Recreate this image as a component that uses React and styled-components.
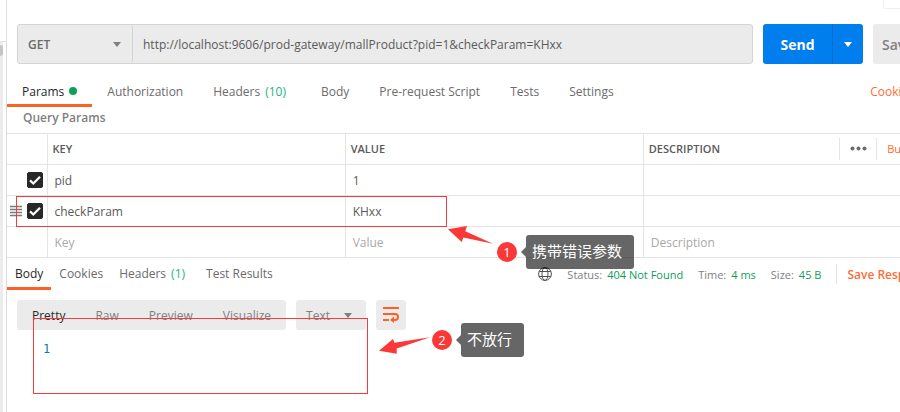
import { useState } from "react";
import styled, { createGlobalStyle } from "styled-components";

const GlobalStyle = createGlobalStyle`
  * {
    box-sizing: border-box;
  }
  body {
    margin: 0;
    background: #fff;
    color: #5a5a5a;
    font-family: "Open Sans", "Noto Sans CJK SC", sans-serif;
    font-size: 12px;
  }
  button, input, select {
    font: inherit;
    color: inherit;
    border: none;
    background: none;
    margin: 0;
    padding: 0;
    outline: none;
  }
  button {
    cursor: pointer;
  }
`
const Viewport = styled.div`
  position: relative;
  overflow: hidden;
  min-height: 100vh;
  display: flex;
`
/* the workspace runs on past the right edge of the window */
const Workspace = styled.div`
  flex: none;
  width: calc(100% + 80px);
  display: flex;
`
const Rail = styled.div`
  flex: none;
  width: 7px;
  border-right: 1px solid #dcdcdc;
  padding-top: 41px;
`
const RailTrack = styled.div`
  height: 100%;
  border-top: 1px solid #e4e4e4;
  padding-top: 3px;
  background: linear-gradient(#ececec, #ececec) left / 3px 100% no-repeat;
`
const RailThumb = styled.div`
  width: 3px;
  height: 11px;
  border-radius: 0 3px 3px 0;
  background: #c4c4c4;
`
const Main = styled.main`
  flex: 1;
  min-width: 0;
`
const TopStrip = styled.header`
  height: 24px;
  display: flex;
  justify-content: flex-end;
  padding-right: 20px;
`
const TopButton = styled.button`
  width: 77px;
  height: 9px;
  border: 1px solid #f0f0f0;
  border-top: none;
  border-radius: 0 0 3px 3px;
`
const RequestBar = styled.form`
  display: flex;
  gap: 10px;
  height: 40px;
  padding-left: 10px;
`
const UrlGroup = styled.div`
  flex: 1;
  display: flex;
  border: 1px solid #d4d4d4;
  border-radius: 3px;
  background: #ebebeb;
`
const SelectBox = styled.label`
  position: relative;
  display: flex;
  align-items: center;
  width: ${props => props.width};
  height: ${props => props.height || 'auto'};
  border-right: ${props => props.divided ? '1px solid #d4d4d4' : 'none'};
  border-radius: 3px;
  background: #ebebeb;
  color: ${props => props.color};
  & svg {
    position: absolute;
    right: ${props => props.caret};
    pointer-events: none;
  }
`
const Select = styled.select`
  appearance: none;
  width: 100%;
  height: 100%;
  padding-left: 10px;
  font-weight: ${props => props.weight || 400};
`
const UrlInput = styled.input`
  flex: 1;
  min-width: 0;
  padding: 0 10px;
`
const SendGroup = styled.div`
  display: flex;
  width: 100px;
  border-radius: 3px;
  overflow: hidden;
  background: #007eee;
  color: #fff;
`
const SendButton = styled.button`
  flex: 1;
  font-size: 14px;
  font-weight: 700;
`
const SendMore = styled.button`
  display: flex;
  align-items: center;
  justify-content: center;
  width: 31px;
  border-left: 1px solid #0a6bcc;
`
const SaveButton = styled.button`
  width: 107px;
  padding-left: 9px;
  border-radius: 3px;
  background: #ebebeb;
  color: #808080;
  font-size: 14px;
  font-weight: 600;
  text-align: left;
`
const TabRow = styled.nav`
  display: flex;
  height: ${props => props.height};
`
const Tab = styled.button`
  display: flex;
  align-items: center;
  padding: ${props => props.drop} ${props => props.pad} 0;
  border-bottom: 3px solid ${props => props.active ? '#ff6026' : 'transparent'};
  color: ${props => props.active ? '#282828' : '#6b6b6b'};
`
const Count = styled.span`
  margin: 0 5px;
  color: #26b47f;
`
const Dot = styled.span`
  width: 8px;
  height: 8px;
  margin-left: 5px;
  border-radius: 50%;
  background: #0aa354;
`
const TextLink = styled.a`
  align-self: center;
  margin-left: ${props => props.push ? 'auto' : '0'};
  margin-right: ${props => props.end || '0'};
  padding-top: ${props => props.drop || '0'};
  color: #ff6c37;
  font-weight: ${props => props.weight || 400};
  text-decoration: none;
  white-space: nowrap;
`
const SectionTitle = styled.h2`
  margin: 0;
  padding-left: 16px;
  height: 26px;
  line-height: 22px;
  font-size: 12px;
  font-weight: 600;
  color: #808080;
`
const TableWrap = styled.div`
  margin-right: 38px;
`
const Table = styled.table`
  width: 100%;
  table-layout: fixed;
  border-collapse: collapse;
`
const Row = styled.tr`
  height: 31px;
  border-top: 1px solid #e4e4e4;
  border-bottom: 1px solid #e4e4e4;
`
const HeadCell = styled.th`
  width: ${props => props.width || 'auto'};
  padding: 0 0 1px 5px;
  border-right: 1px solid #e4e4e4;
  font-size: 11px;
  font-weight: 600;
  text-align: left;
`
const HeadTools = styled.div`
  display: flex;
  align-items: center;
  height: 22px;
`
const MoreButton = styled.button`
  display: flex;
  align-items: center;
  justify-content: center;
  width: 38px;
  height: 22px;
  margin-left: auto;
  margin-right: 10px;
  border-left: 1px solid #e4e4e4;
  border-right: 1px solid #e4e4e4;
`
const Cell = styled.td`
  padding: 0;
  border-right: 1px solid #e4e4e4;
`
const CellInput = styled.input`
  display: block;
  width: 100%;
  height: 30px;
  padding: 0 7px;
  &::placeholder {
    color: #a9a9a9;
    opacity: 1;
  }
`
const RowTools = styled.div`
  display: flex;
  align-items: center;
  justify-content: flex-end;
  gap: 5px;
  padding-right: 4px;
`
const CheckLabel = styled.label`
  display: grid;
  width: 16px;
  height: 16px;
  & > * {
    grid-area: 1 / 1;
  }
  & svg {
    pointer-events: none;
  }
`
const CheckInput = styled.input`
  appearance: none;
  width: 16px;
  height: 16px;
  border: 1px solid #282828;
  border-radius: 2px;
  &:checked {
    background: #282828;
  }
`
const ResponseMeta = styled.div`
  display: flex;
  align-items: center;
  margin-left: auto;
  margin-right: 47px;
  font-size: 11px;
  color: #808080;
  white-space: nowrap;
`
const Meta = styled.span`
  margin-left: 15px;
`
const MetaValue = styled.span`
  margin-left: 5px;
  color: #0f9d58;
`
const SaveResponse = styled.div`
  display: flex;
  height: 20px;
  margin-left: 15px;
  padding-left: 10px;
  border-left: 1px solid #e4e4e4;
  font-size: 12px;
`
const ViewBar = styled.div`
  display: flex;
  gap: 10px;
  padding: 10px 10px 0;
  height: 40px;
`
const Segments = styled.div`
  display: flex;
  border-radius: 3px;
  background: #ebebeb;
`
const Segment = styled.button`
  padding: 0 15px;
  color: ${props => props.active ? '#282828' : '#808080'};
`
const WrapButton = styled.button`
  display: flex;
  align-items: center;
  justify-content: center;
  width: 30px;
  height: 30px;
  border-radius: 3px;
  background: #ebebeb;
`
const Editor = styled.pre`
  margin: 0;
  padding: 10px 36px;
  font-family: "DejaVu Sans Mono", monospace;
  font-size: 12px;
  line-height: 18px;
  color: #0f7ba0;
`
const Frame = styled.div`
  position: absolute;
  left: ${props => props.x}px;
  top: ${props => props.y}px;
  width: ${props => props.w}px;
  height: ${props => props.h}px;
  border: 1px solid #f93a3a;
  pointer-events: none;
`
const Arrow = styled.svg`
  position: absolute;
  left: ${props => props.x}px;
  top: ${props => props.y}px;
  fill: #fb3838;
  pointer-events: none;
`
const Note = styled.div`
  position: absolute;
  left: ${props => props.x}px;
  top: ${props => props.y}px;
  display: flex;
  align-items: center;
`
const NoteNumber = styled.span`
  width: 20px;
  height: 20px;
  margin-right: 4px;
  border-radius: 50%;
  background: #fb3838;
  color: #fff;
  font-size: 13px;
  line-height: 20px;
  text-align: center;
`
const NotePointer = styled.span`
  border: 5px solid transparent;
  border-left: none;
  border-right-color: rgba(0, 0, 0, 0.6);
`
const NoteText = styled.span`
  height: 34px;
  padding: 0 12px 0 6px;
  border-radius: 3px;
  background: rgba(0, 0, 0, 0.6);
  color: #fff;
  font-family: "Noto Sans CJK SC", sans-serif;
  font-size: 15px;
  line-height: 32px;
  white-space: nowrap;
`

const tabs = ["Params", "Authorization", "Headers", "Body", "Pre-request Script", "Tests", "Settings"]
const responseTabs = ["Body", "Cookies", "Headers", "Test Results"]
const views = ["Pretty", "Raw", "Preview", "Visualize"]
const params = [
  { key: "pid", value: "1" },
  { key: "checkParam", value: "KHxx", handle: true },
]

function Caret({ color, width = 8 }) {
  return (
    <svg width={width} height="5" viewBox="0 0 8 5" preserveAspectRatio="none">
      <path d="M0 0h8L4 5z" fill={color} />
    </svg>
  )
}

function Checkbox({ label }) {
  const [checked, setChecked] = useState(true)
  return (
    <CheckLabel>
      <CheckInput type="checkbox" aria-label={label} checked={checked} onChange={e => setChecked(e.target.checked)} />
      {checked &&
        <svg width="16" height="16" viewBox="0 0 16 16">
          <path d="M3 8.4L6.3 11.5L13 4.8" fill="none" stroke="#fff" strokeWidth="2.2" />
        </svg>
      }
    </CheckLabel>
  )
}

function ParamsTable() {
  return (
    <TableWrap>
      <Table>
        <thead>
          <Row>
            <HeadCell width="40px" aria-label="Enabled" />
            <HeadCell>KEY</HeadCell>
            <HeadCell>VALUE</HeadCell>
            <HeadCell>
              <HeadTools>
                DESCRIPTION
                <MoreButton type="button" aria-label="More">
                  <svg width="17" height="5" viewBox="0 0 17 5" fill="#6b6b6b">
                    <circle cx="2.5" cy="2.5" r="2" />
                    <circle cx="8.5" cy="2.5" r="2" />
                    <circle cx="14.5" cy="2.5" r="2" />
                  </svg>
                </MoreButton>
                <TextLink href="#bulk" end="9px">Bulk Edit</TextLink>
              </HeadTools>
            </HeadCell>
          </Row>
        </thead>
        <tbody>
          {params.map(item =>
            <Row key={item.key}>
              <Cell>
                <RowTools>
                  {item.handle &&
                    <svg width="12" height="12" viewBox="0 0 12 12" stroke="#7a7a7a" strokeWidth="1.5">
                      <path d="M0 1.5h12M0 4.5h12M0 7.5h12M0 10.5h12" />
                    </svg>
                  }
                  <Checkbox label={item.key} />
                </RowTools>
              </Cell>
              <Cell><CellInput aria-label="Key" defaultValue={item.key} /></Cell>
              <Cell><CellInput aria-label="Value" defaultValue={item.value} /></Cell>
              <Cell><CellInput aria-label="Description" /></Cell>
            </Row>
          )}
          <Row>
            <Cell />
            <Cell><CellInput aria-label="New key" placeholder="Key" /></Cell>
            <Cell><CellInput aria-label="New value" placeholder="Value" /></Cell>
            <Cell><CellInput aria-label="New description" placeholder="Description" /></Cell>
          </Row>
        </tbody>
      </Table>
    </TableWrap>
  )
}

function Response() {
  return (
    <section>
      <TabRow height="32px">
        {responseTabs.map(name =>
          <Tab key={name} pad="8px" drop="2px" active={name === "Body" ? 1 : undefined}>
            {name}
            {name === "Headers" && <Count>(1)</Count>}
          </Tab>
        )}
        <ResponseMeta>
          <svg width="14" height="14" viewBox="0 0 14 14" fill="none" stroke="#505050">
            <circle cx="7" cy="7" r="6.4" />
            <ellipse cx="7" cy="7" rx="3" ry="6.4" />
            <path d="M1.2 4.5h11.6M1.2 9.5h11.6" />
          </svg>
          <Meta>Status:<MetaValue>404 Not Found</MetaValue></Meta>
          <Meta>Time:<MetaValue>4 ms</MetaValue></Meta>
          <Meta>Size:<MetaValue>45 B</MetaValue></Meta>
          <SaveResponse>
            <TextLink href="#save" weight="600">Save Response</TextLink>
          </SaveResponse>
        </ResponseMeta>
      </TabRow>
      <ViewBar>
        <Segments>
          {views.map(name =>
            <Segment key={name} active={name === "Pretty" ? 1 : undefined}>{name}</Segment>
          )}
        </Segments>
        <SelectBox width="70px" height="30px" caret="14px" color="#808080">
          <Select aria-label="Format">
            <option>Text</option>
          </Select>
          <Caret color="#808080" />
        </SelectBox>
        <WrapButton aria-label="Wrap lines">
          <svg width="16" height="16" viewBox="0 0 16 16" fill="none" stroke="#ff6026" strokeWidth="2">
            <path d="M0 1h16M0 7h12a3 3 0 0 1 0 6H10M0 13h6" />
            <path d="M11 9.6L7 13l4 3z" fill="#ff6026" stroke="none" />
          </svg>
        </WrapButton>
      </ViewBar>
      <Editor>1</Editor>
    </section>
  )
}

function Annotations() {
  return (
    <>
      <Frame x={16} y={196} w={431} h={31} />
      <Arrow x={448} y={226} width="46" height="18" viewBox="0 0 46 18">
        <path d="M0 3.3L19 0L17.3 5.3L45 17.8L15.3 11.4L13.7 16z" />
      </Arrow>
      <Note x={497} y={235}>
        <NoteNumber>1</NoteNumber>
        <NotePointer />
        <NoteText>携带错误参数</NoteText>
      </Note>
      <Frame x={33} y={318} w={335} h={76} />
      <Arrow x={379} y={337} width="51" height="17" viewBox="0 0 51 17">
        <path d="M0 13.7L14 2L15.3 5.7L51 .3L17.7 11.6V16.7z" />
      </Arrow>
      <Note x={432} y={323}>
        <NoteNumber>2</NoteNumber>
        <NotePointer />
        <NoteText>不放行</NoteText>
      </Note>
    </>
  )
}

export default function App() {
  return (
    <Viewport>
      <GlobalStyle />
      <Workspace>
        <Rail>
          <RailTrack>
            <RailThumb />
          </RailTrack>
        </Rail>
        <Main>
          <TopStrip>
            <TopButton aria-label="Examples" />
          </TopStrip>
          <RequestBar onSubmit={e => e.preventDefault()}>
            <UrlGroup>
              <SelectBox width="115px" caret="11px" divided={1} color="#6b6b6b">
                <Select aria-label="Method" weight="600">
                  <option>GET</option>
                </Select>
                <Caret color="#808080" />
              </SelectBox>
              <UrlInput aria-label="Request URL" defaultValue="http://localhost:9606/prod-gateway/mallProduct?pid=1&checkParam=KHxx" />
            </UrlGroup>
            <SendGroup>
              <SendButton>Send</SendButton>
              <SendMore type="button" aria-label="Send options"><Caret color="#fff" /></SendMore>
            </SendGroup>
            <SaveButton type="button">Save</SaveButton>
          </RequestBar>
          <TabRow height="43px">
            {tabs.map(name =>
              <Tab key={name} pad="15px" drop="14px" active={name === "Params" ? 1 : undefined}>
                {name}
                {name === "Params" && <Dot />}
                {name === "Headers" && <Count>(10)</Count>}
              </Tab>
            )}
            <TextLink href="#cookies" push={1} end="66px" drop="11px">Cookies</TextLink>
          </TabRow>
          <SectionTitle>Query Params</SectionTitle>
          <ParamsTable />
          <Response />
        </Main>
      </Workspace>
      <Annotations />
    </Viewport>
  )
}
